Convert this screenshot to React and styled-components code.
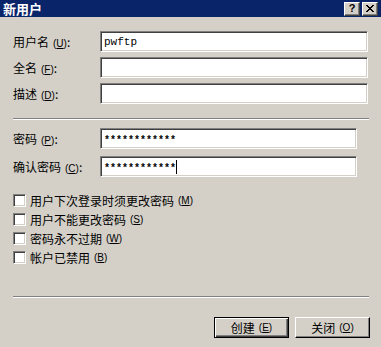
import React from 'react';
import styled, { createGlobalStyle } from 'styled-components';

const GlobalStyle = createGlobalStyle`
  html, body {
    margin: 0;
    padding: 0;
    background: #d4d0c8;
  }
  body {
    font-family: 'SimSun', 'Noto Sans CJK SC', 'Liberation Sans', sans-serif;
    font-size: 12px;
    color: #000;
  }
`;

const Window = styled.div`
  width: 381px;
  height: 347px;
  background: #d4d0c8;
  display: flex;
  flex-direction: column;
  overflow: hidden;
`;

const TitleBar = styled.div`
  height: 17px;
  background: #0a246a;
  display: flex;
  align-items: center;
  justify-content: space-between;
  padding: 0 3px 0 3px;
`;

const TitleText = styled.span`
  color: #fff;
  font-weight: bold;
  font-size: 13px;
  line-height: 17px;
`;

const CaptionButtons = styled.div`
  display: flex;
  gap: 2px;
`;

const CaptionButton = styled.div`
  width: 16px;
  height: 14px;
  box-sizing: border-box;
  background: #d4d0c8;
  border-top: 1px solid #fff;
  border-left: 1px solid #fff;
  border-right: 1px solid #404040;
  border-bottom: 1px solid #404040;
  box-shadow: inset -1px -1px 0 #808080;
  display: flex;
  align-items: center;
  justify-content: center;
  font-family: 'Liberation Sans', sans-serif;
  font-weight: bold;
  font-size: 11px;
  line-height: 1;
`;

const Content = styled.div`
  display: flex;
  flex-direction: column;
  padding: 14px 12px 0 13px;
`;

const FieldGroup = styled.div`
  display: flex;
  flex-direction: column;
  gap: ${(p) => p.gap}px;
  margin-top: ${(p) => p.top || 0}px;
`;

const Row = styled.div`
  display: flex;
  align-items: center;
  height: 21px;
`;

const Label = styled.span`
  width: 87px;
  white-space: nowrap;
`;

const Mnemonic = styled.span`
  font-family: 'Liberation Sans', sans-serif;
  font-size: 10px;
  margin-left: 4px;
  u {
    text-underline-offset: 1px;
  }
`;

const TextBox = styled.div`
  width: ${(p) => p.width}px;
  height: 21px;
  box-sizing: border-box;
  background: #fff;
  border-top: 1px solid #808080;
  border-left: 1px solid #808080;
  border-right: 1px solid #fff;
  border-bottom: 1px solid #fff;
  box-shadow: inset 1px 1px 0 #404040, inset -1px -1px 0 #d4d0c8;
  padding: 0 3px;
  display: flex;
  align-items: center;
  font-family: 'Liberation Mono', monospace;
  font-size: 11px;
`;

const Secret = styled.span`
  font-family: 'Liberation Mono', monospace;
  font-size: 10px;
  font-weight: bold;
  letter-spacing: 0;
  transform: translateY(2px);
`;

const Caret = styled.span`
  display: inline-block;
  width: 1px;
  height: 14px;
  background: #000;
`;

const Separator = styled.div`
  height: 0;
  border-top: 1px solid #808080;
  border-bottom: 1px solid #fff;
  margin-top: ${(p) => p.top}px;
`;

const CheckList = styled.div`
  display: flex;
  flex-direction: column;
  gap: 6px;
  margin-top: 17px;
`;

const CheckRow = styled.label`
  display: flex;
  align-items: center;
  height: 13px;
  white-space: nowrap;
`;

const CheckBox = styled.span`
  width: 13px;
  height: 13px;
  box-sizing: border-box;
  background: #fff;
  border-top: 1px solid #808080;
  border-left: 1px solid #808080;
  border-right: 1px solid #fff;
  border-bottom: 1px solid #fff;
  box-shadow: inset 1px 1px 0 #404040, inset -1px -1px 0 #d4d0c8;
  margin-right: 4px;
  flex-shrink: 0;
`;

const ButtonRow = styled.div`
  display: flex;
  justify-content: flex-end;
  gap: 6px;
  margin-top: 19px;
  margin-right: -1px;
`;

const Button = styled.div`
  width: 75px;
  height: 21px;
  box-sizing: border-box;
  background: #d4d0c8;
  display: flex;
  align-items: center;
  justify-content: center;
  border-top: 1px solid ${(p) => (p.primary ? '#000' : '#fff')};
  border-left: 1px solid ${(p) => (p.primary ? '#000' : '#fff')};
  border-right: 1px solid #000;
  border-bottom: 1px solid #000;
  box-shadow: ${(p) =>
    p.primary
      ? 'inset 1px 1px 0 #fff, inset -1px -1px 0 #404040, inset -2px -2px 0 #808080'
      : 'inset -1px -1px 0 #808080'};
  white-space: nowrap;
`;

const M = ({ k }) => (
  <Mnemonic>
    (<u>{k}</u>)
  </Mnemonic>
);

const fields = [
  { label: '用户名', key: 'U', value: 'pwftp' },
  { label: '全名', key: 'F', value: '' },
  { label: '描述', key: 'D', value: '' },
];

const checks = [
  { label: '用户下次登录时须更改密码', key: 'M' },
  { label: '用户不能更改密码', key: 'S' },
  { label: '密码永不过期', key: 'W' },
  { label: '帐户已禁用', key: 'B' },
];

const App = () => {
  return (
    <>
      <GlobalStyle />
      <Window>
        <TitleBar>
          <TitleText>新用户</TitleText>
          <CaptionButtons>
            <CaptionButton>?</CaptionButton>
            <CaptionButton>
              <svg width="8" height="7" viewBox="0 0 8 7" shapeRendering="crispEdges">
                <path
                  d="M0 0h2v1h-2zM6 0h2v1h-2zM1 1h2v1h-2zM5 1h2v1h-2zM2 2h4v1h-4zM3 3h2v1h-2zM2 4h4v1h-4zM1 5h2v1h-2zM5 5h2v1h-2zM0 6h2v1h-2zM6 6h2v1h-2z"
                  fill="#000"
                />
              </svg>
            </CaptionButton>
          </CaptionButtons>
        </TitleBar>
        <Content>
          <FieldGroup gap={5}>
            {fields.map((f) => (
              <Row key={f.key}>
                <Label>
                  {f.label}
                  <M k={f.key} />:
                </Label>
                <TextBox width={268}>{f.value}</TextBox>
              </Row>
            ))}
          </FieldGroup>
          <Separator top={14} />
          <FieldGroup gap={7} top={8}>
            <Row>
              <Label>
                密码<M k="P" />:
              </Label>
              <TextBox width={257}>
                <Secret>************</Secret>
              </TextBox>
            </Row>
            <Row>
              <Label>
                确认密码<M k="C" />:
              </Label>
              <TextBox width={257}>
                <Secret>************</Secret>
                <Caret />
              </TextBox>
            </Row>
          </FieldGroup>
          <CheckList>
            {checks.map((c) => (
              <CheckRow key={c.key}>
                <CheckBox />
                {c.label}
                <M k={c.key} />
              </CheckRow>
            ))}
          </CheckList>
          <Separator top={32} />
          <ButtonRow>
            <Button primary>
              创建<M k="E" />
            </Button>
            <Button>
              关闭<M k="O" />
            </Button>
          </ButtonRow>
        </Content>
      </Window>
    </>
  );
};

export default App;
